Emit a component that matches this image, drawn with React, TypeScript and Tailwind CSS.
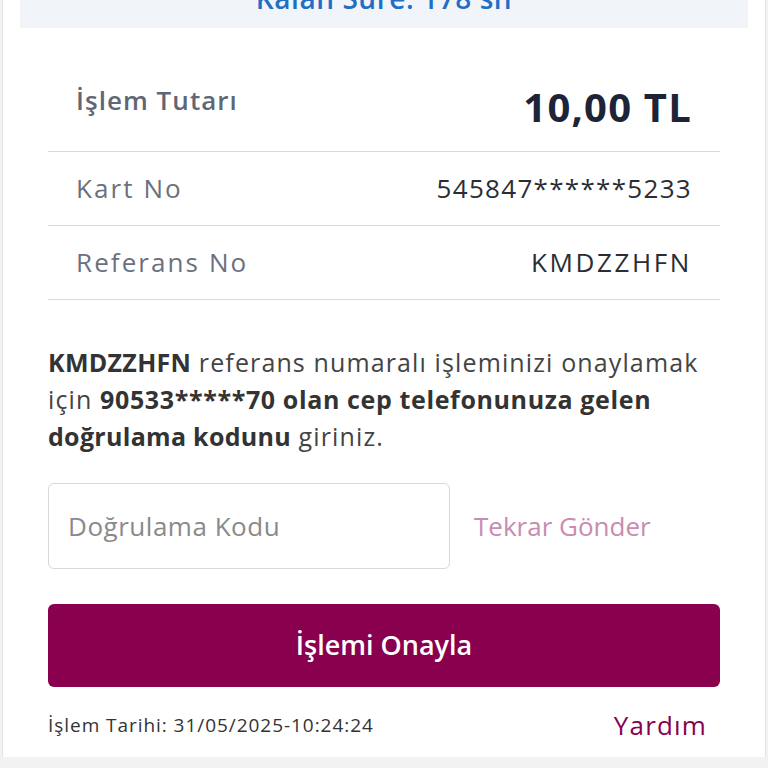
import React from 'react';

const rows = [
  { label: 'Kart No', value: '545847******5233', track: 'tracking-[0.05em]' },
  { label: 'Referans No', value: 'KMDZZHFN', track: 'tracking-[0.1em]' },
];

export default function App() {
  return (
    <div className="min-h-screen bg-[#f2f2f2] font-['Open_Sans',sans-serif]">
      <div className="mx-[2px] h-[757px] bg-white border-x border-[#e3e3e3] overflow-hidden">
        {/* Timer banner, scrolled mostly out of view */}
        <div className="mx-[17px] h-[28px] bg-[#f1f4f9] overflow-hidden flex items-end justify-center pb-[16px]">
          <span className="text-[28px] leading-none font-semibold text-[#1f6fc5] tracking-[0.02em] whitespace-nowrap">Kalan Süre: 178 sn</span>
        </div>

        <div className="mx-[45px]">
          {/* Summary */}
          <div className="mt-[42px]">
            <div className="h-[82px] flex justify-between px-[28px] border-b border-[#d9d9d9]">
              <span className="mt-[15px] text-[26px] leading-[30px] font-semibold text-[#5f6675] tracking-[0.04em]">İşlem Tutarı</span>
              <span className="mt-[15px] text-[40px] leading-[44px] font-bold text-[#1e2437] tracking-[0.03em]">10,00 TL</span>
            </div>
            {rows.map(r => (
              <div key={r.label} className="h-[74px] flex items-center justify-between px-[28px] border-b border-[#d9d9d9]">
                <span className="text-[26px] text-[#6b7080] tracking-[0.08em]">{r.label}</span>
                <span className={`text-[26px] text-[#2a2d36] ${r.track}`}>{r.value}</span>
              </div>
            ))}
          </div>

          {/* Info */}
          <p className="mt-[44px] text-[25px] leading-[37px] text-[#444] tracking-[0.045em] whitespace-nowrap">
            <b className="font-bold text-[#333] tracking-[0.012em]">KMDZZHFN</b> referans numaralı işleminizi onaylamak<br />
            için <b className="font-bold text-[#333] tracking-[0.025em]">90533*****70 olan cep telefonunuza gelen</b><br />
            <b className="font-bold text-[#333] tracking-[0.012em]">doğrulama kodunu</b> giriniz.
          </p>

          {/* Code input */}
          <div className="mt-[28px] flex items-center">
            <input
              placeholder="Doğrulama Kodu"
              className="w-[402px] h-[86px] rounded-[6px] border border-[#d8d8d8] px-[19px] text-[26px] tracking-[0.02em] text-[#333] placeholder:text-[#8a8a8a] outline-none"
            />
            <span className="ml-[24px] text-[26px] text-[#c98bb1]">Tekrar Gönder</span>
          </div>

          <button className="mt-[35px] w-full h-[83px] rounded-[6px] bg-[#89004f] text-white text-[27px] font-semibold">
            İşlemi Onayla
          </button>

          <div className="mt-[13px] h-[50px] flex items-center justify-between pr-[13px]">
            <span className="text-[19px] text-[#333] tracking-[0.05em]">İşlem Tarihi: 31/05/2025-10:24:24</span>
            <span className="text-[26px] text-[#89004f] tracking-[0.045em]">Yardım</span>
          </div>
        </div>
      </div>
    </div>
  );
}
